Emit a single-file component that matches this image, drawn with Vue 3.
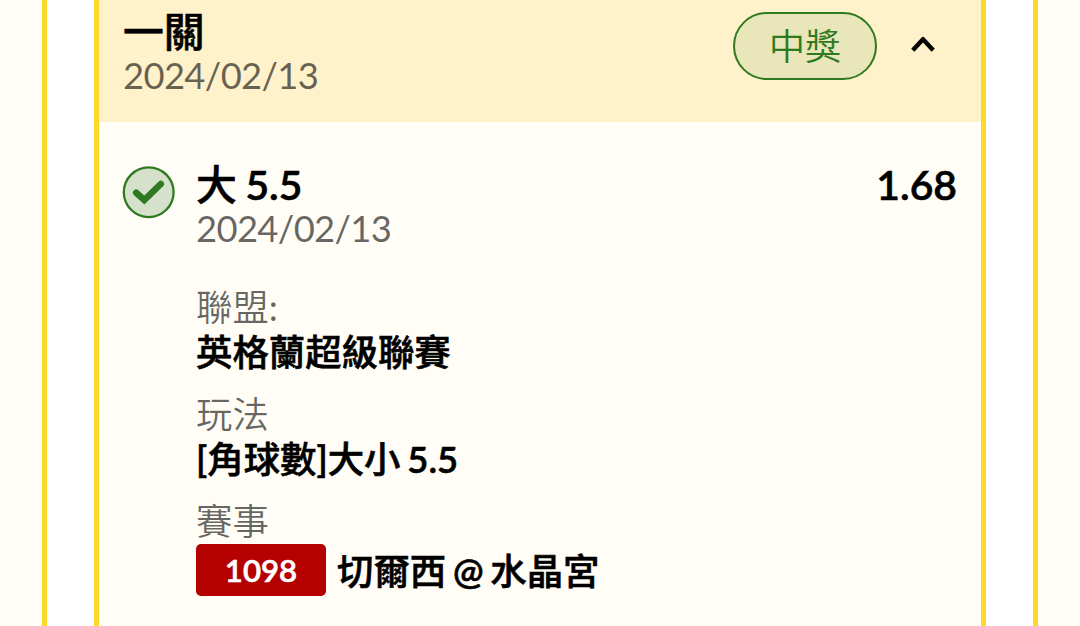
<template>
  <div class="page">
    <div class="panel">
      <div class="card">
        <header class="card-header">
          <div class="heading">
            <h2 class="title">一關</h2>
            <p class="date">{{ date }}</p>
          </div>
          <span class="status">中獎</span>
          <button class="toggle" @click="open = !open">
            <svg :class="{ closed: !open }" width="26" height="18" viewBox="0 0 26 18">
              <path d="M2.8 14.2 L13 3.2 L23.2 14.2" fill="none" stroke="#000" stroke-width="4.4" stroke-linejoin="round" />
            </svg>
          </button>
        </header>
        <section v-if="open" class="bet">
          <svg class="check" width="53" height="53" viewBox="0 0 53 53">
            <circle cx="26.7" cy="26.2" r="24.9" fill="#d5e1cb" stroke="#2f7a20" stroke-width="2.3" />
            <path d="M14.2 26.8 L22.3 34 L38.8 18" fill="none" stroke="#2f7a20" stroke-width="6.6" stroke-linecap="round" />
          </svg>
          <div class="details">
            <div class="pick">
              <h3 class="title">大 5.5</h3>
              <span class="odds">1.68</span>
            </div>
            <p class="date">{{ date }}</p>
            <dl class="info">
              <div v-for="item in info" :key="item.label" class="info-row">
                <dt>{{ item.label }}</dt>
                <dd>{{ item.value }}</dd>
              </div>
              <div class="info-row">
                <dt>賽事</dt>
                <dd class="match">
                  <span class="code">1098</span>
                  <span class="teams">切爾西 @ 水晶宮</span>
                </dd>
              </div>
            </dl>
          </div>
        </section>
      </div>
    </div>
  </div>
</template>

<script setup>
import { ref } from 'vue';

const open = ref(true);
const date = '2024/02/13';
const info = [
  { label: '聯盟:', value: '英格蘭超級聯賽' },
  { label: '玩法', value: '[角球數]大小 5.5' }
];
</script>

<style>
body {
  margin: 0;
  overflow: hidden;
}
</style>

<style scoped>
.page {
  box-sizing: border-box;
  height: 626px;
  padding: 0 42px;
  overflow: hidden;
  background: #fffdf5;
  color: #000;
  font-family: Lato, "Noto Sans CJK TC DemiLight", "Noto Sans CJK TC", sans-serif;
  font-size: 36.4px;
}

.panel {
  box-sizing: border-box;
  height: 100%;
  padding: 0 47px;
  background: #fff;
  border: solid #fdd82b;
  border-width: 0 5px;
}

.card {
  box-sizing: border-box;
  height: 100%;
  background: #fffdf5;
  border: solid #fdd82b;
  border-width: 0 5px;
}

h2, h3, p, dl, dd {
  margin: 0;
}

.card-header {
  display: flex;
  box-sizing: border-box;
  height: 122px;
  padding: 10px 24px 0;
  background: #fff1ca;
}

.heading {
  flex: 1;
}

.title,
.odds,
dd {
  font-family: Lato, "Noto Sans CJK TC Medium", "Noto Sans CJK TC", sans-serif;
  font-weight: 600;
  -webkit-text-stroke: 0.6px currentColor;
}

.title {
  font-size: 40.8px;
  line-height: 44px;
  word-spacing: -1.5px;
}

.date {
  color: rgba(0, 0, 0, 0.6);
  letter-spacing: -0.65px;
  line-height: 43px;
}

.heading .date {
  line-height: 42px;
}

.status {
  box-sizing: border-box;
  width: 144px;
  height: 68px;
  margin-top: 2px;
  border: 2px solid #2f7a20;
  border-radius: 34px;
  background: #e9e6b9;
  color: #2f7a20;
  font-size: 36px;
  line-height: 64px;
  text-align: center;
}

.toggle {
  height: 26px;
  margin: 22px 21px 0 33px;
  padding: 0;
  border: 0;
  background: none;
}

.toggle svg {
  display: block;
}

.toggle .closed {
  transform: rotate(180deg);
}

.bet {
  display: flex;
  padding: 41px 24px 0 23px;
}

.check {
  flex: none;
  margin-top: 2.5px;
}

.details {
  flex: 1;
  margin-left: 21px;
}

.pick {
  display: flex;
  justify-content: space-between;
}

.odds {
  font-size: 40.8px;
  line-height: 44px;
}

.info {
  margin-top: 35px;
}

.info-row {
  margin-bottom: 17px;
}

dt {
  color: rgba(0, 0, 0, 0.6);
  line-height: 45px;
}

dd {
  line-height: 45px;
  word-spacing: -2.3px;
}

.match {
  display: flex;
  align-items: center;
}

.code {
  width: 130px;
  height: 52px;
  margin-right: 11px;
  border-radius: 5px;
  background: #b50000;
  color: #fff;
  font-size: 31.2px;
  line-height: 52px;
  text-align: center;
}

.teams {
  margin-top: 2px;
}
</style>
